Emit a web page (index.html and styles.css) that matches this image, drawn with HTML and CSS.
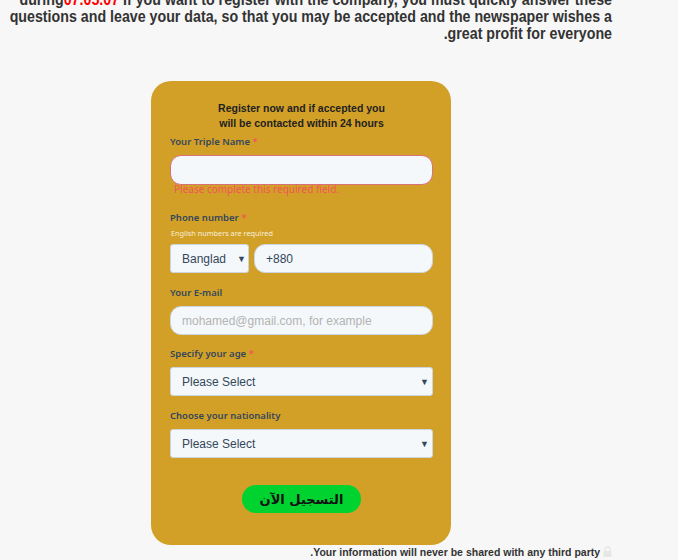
FILE: index.html
```html
<!DOCTYPE html>
<html lang="en">
<head>
<meta charset="utf-8">
<link rel="stylesheet" href="styles.css">
</head>
<body>
<div class="page">
  <p class="intro">during<span class="date">07.05.07</span> If you want to register with the company, you must quickly answer these<br>questions and leave your data, so that you may be accepted and the newspaper wishes a<br>great profit for everyone.</p>

  <form class="card">
    <h2 class="card-title">Register now and if accepted you<br>will be contacted within 24 hours</h2>

    <div class="label first">Your Triple Name <span class="req">*</span></div>
    <div class="input error-input"></div>
    <div class="error">Please complete this required field.</div>

    <div class="label gap15">Phone number <span class="req">*</span></div>
    <div class="hint">English numbers are required</div>
    <div class="phone-row">
      <div class="select country"><span>Banglad</span><span class="arrow">▼</span></div>
      <div class="input phone"><span>+880</span></div>
    </div>

    <div class="label gap13">Your E-mail</div>
    <div class="input"><span class="placeholder">mohamed@gmail.com, for example</span></div>

    <div class="label gap12">Specify your age <span class="req">*</span></div>
    <div class="select"><span>Please Select</span><span class="arrow">▼</span></div>

    <div class="label gap13">Choose your nationality</div>
    <div class="select"><span>Please Select</span><span class="arrow">▼</span></div>

    <div class="btn-wrap"><button type="button" class="btn">التسجيل الآن</button></div>
  </form>

  <p class="privacy"><svg class="lock" width="9" height="11" viewBox="0 0 9 11"><path d="M2 5V3.2a2.5 2.5 0 0 1 5 0V5" fill="none" stroke="#e6e6e6" stroke-width="1.4"/><rect x="0.5" y="5" width="8" height="6" rx="1" fill="#e6e6e6"/></svg> Your information will never be shared with any third party.</p>
</div>
</body>
</html>
```

FILE: styles.css
```css
html, body {
  margin: 0;
  padding: 0;
  background: #f7f7f7;
  height: 560px;
  overflow: hidden;
}

.page {
  display: flex;
  flex-direction: column;
  width: 612px;
}

.intro {
  direction: rtl;
  white-space: nowrap;
  width: 740px;
  margin: -9px 0 0 -128px;
  transform: scaleX(0.889);
  transform-origin: right top;
  font-family: "Liberation Sans", Arial, sans-serif;
  font-weight: bold;
  font-size: 16px;
  line-height: 17px;
  color: #333;
}

.date {
  color: #ff0000;
}

.card {
  margin: 39px 0 0 151px;
  width: 300px;
  box-sizing: border-box;
  padding: 20px 18px 32px 19px;
  background: #d3a027;
  border-radius: 20px;
  display: flex;
  flex-direction: column;
}

.card-title {
  margin: 0;
  text-align: center;
  font-family: "Liberation Sans", Arial, sans-serif;
  font-weight: bold;
  font-size: 10.5px;
  line-height: 15px;
  color: #222;
}

.label {
  font-family: "Noto Sans", "Open Sans", sans-serif;
  font-weight: 600;
  font-size: 9.5px;
  line-height: 14px;
  color: #33475b;
  margin-bottom: 6px;
}

.label.first { margin-top: 4px; }
.label.gap15 { margin-top: 16px; margin-bottom: 3px; }
.label.gap13 { margin-top: 13px; }
.label.gap12 { margin-top: 12px; }

.req {
  color: #f2545b;
}

.input, .select {
  box-sizing: border-box;
  height: 29px;
  background: #f5f8fa;
  border: 1px solid #cbd6e2;
  border-radius: 11px;
  display: flex;
  align-items: center;
  padding: 0 11px;
  font-family: "Liberation Sans", Arial, sans-serif;
  font-size: 12px;
  color: #33475b;
}

.error-input {
  height: 30px;
  border-color: #d9707a;
}

.error {
  margin-top: -1px;
  padding-left: 4px;
  font-family: "Noto Sans", "Open Sans", sans-serif;
  font-size: 10px;
  line-height: 11px;
  color: #f2545b;
}

.hint {
  font-family: "Noto Sans", "Open Sans", sans-serif;
  font-size: 7.3px;
  line-height: 11px;
  color: #f7efd8;
  padding-left: 1px;
  margin-bottom: 5px;
}

.phone-row {
  display: flex;
  gap: 5px;
}

.select {
  border-radius: 3px;
  justify-content: space-between;
  padding: 0 3px 0 11px;
}

.country {
  width: 79px;
  flex: none;
  padding-right: 2px;
}

.phone {
  flex: 1;
}

.arrow {
  font-size: 9px;
  color: #33475b;
}

.placeholder {
  color: #b3b3b3;
}

.btn-wrap {
  display: flex;
  justify-content: center;
  margin-top: 27px;
}

.btn {
  width: 119px;
  height: 28px;
  border: none;
  border-radius: 14px;
  background: #00d230;
  font-family: "DejaVu Sans", "Noto Sans", sans-serif;
  font-weight: bold;
  font-size: 13px;
  color: #111;
  padding: 0;
  direction: rtl;
}

.privacy {
  direction: rtl;
  margin: 0;
  font-family: "Liberation Sans", Arial, sans-serif;
  font-weight: bold;
  font-size: 10.5px;
  line-height: 14px;
  color: #333;
}

.lock {
  vertical-align: -1px;
}
```
